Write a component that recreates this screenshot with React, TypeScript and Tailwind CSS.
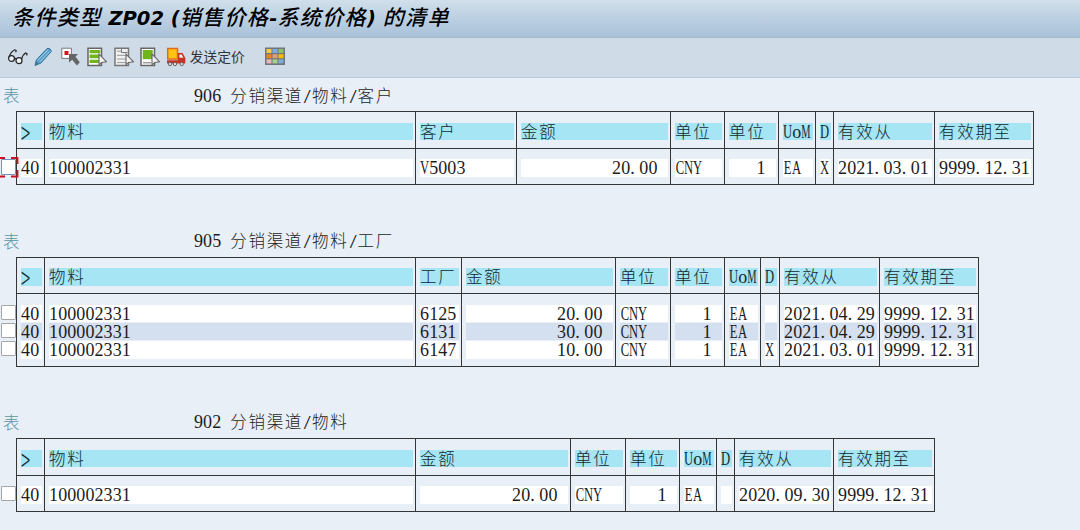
import type { ReactNode } from "react";

type Column = { label: string; width: string; align?: "right"; pad?: string };
type Row = string[];

// Splits list text into runs so that every character keeps to the fixed-pitch grid
function GridText({ children }: { children: string }) {
  const runs = children.match(/[0-9]+|[A-Za-z]+|[.]|[/]|[ ]|[>]|[^0-9A-Za-z./ >]+/g) ?? [];
  return (
    <span className="whitespace-pre">
      {runs.map((run, i) => {
        if (/^[0-9]/.test(run)) {
          return (
            <span key={i} className="tracking-[0.08px]">
              {run}
            </span>
          );
        }
        if (/^[A-Za-z]/.test(run)) return <Letters key={i}>{run}</Letters>;
        if (run === ".") {
          return (
            <span key={i} className="tracking-[4.58px]">
              .
            </span>
          );
        }
        if (run === "/") {
          return (
            <span key={i} className="inline-flex w-[9.08px] justify-center">
              <span className="scale-x-[1.5] scale-y-[1.1] text-[16.5px]">/</span>
            </span>
          );
        }
        if (run === " ") {
          return (
            <span key={i} className="tracking-[4.58px]">
              {" "}
            </span>
          );
        }
        if (run === ">") return <Chevron key={i} />;
        return (
          <span key={i} className="font-['Noto_Sans_CJK_SC',sans-serif] text-[16.5px] leading-none font-light tracking-[1.66px]">
            {run}
          </span>
        );
      })}
    </span>
  );
}

function Letters({ children }: { children: string }) {
  return (
    <>
      {children.split("").map((c, i) => (
        <span key={i} className="inline-flex w-[9.08px] justify-center">
          <span className={c === "o" ? "" : c === "M" ? "scale-x-[0.58]" : "scale-x-[0.7]"}>{c}</span>
        </span>
      ))}
    </>
  );
}

function Chevron() {
  return (
    <span className="inline-block origin-[left_58%] scale-y-[1.9] font-['Noto_Sans_CJK_SC',sans-serif] text-[17px] leading-none font-light">
      &gt;
    </span>
  );
}

function RowCheckbox({ focused }: { focused?: boolean }) {
  return (
    <span className="relative block h-[18.15px] w-4 shrink-0">
      <span
        className={
          focused
            ? "absolute top-px left-px h-4 w-[15px] rounded-[1px] border border-[#7194bd] bg-white"
            : "absolute top-px left-px h-[15px] w-[15px] rounded-[1px] border border-[#a4a6a8] bg-white"
        }
      />
      {focused && (
        <svg className="absolute -top-px left-0 z-10" width="19" height="21" fill="none" stroke="#cf1020" strokeWidth="1.8">
          <path d="M0 1h5M11 1h6.5v6M17.5 13v6.500H11M5 19.500H0" />
        </svg>
      )}
    </span>
  );
}

function ConditionTable({ id, title, columns, rows, focused }: { id: string; title: string; columns: Column[]; rows: Row[]; focused?: boolean }) {
  return (
    <section>
      <div className="flex h-[18px] items-center pl-[3px] leading-[18px]">
        <div className="w-[191px] pt-[2px] text-[#5b94a4]">
          <GridText>表</GridText>
        </div>
        <div className="pt-[2px]">
          <GridText>{id + " " + title}</GridText>
        </div>
      </div>
      <div className="mt-[7.4px] flex">
        <div className="w-4 shrink-0 pt-[47px]">
          {rows.map((_, i) => (
            <RowCheckbox key={i} focused={focused} />
          ))}
        </div>
        <div className="flex border-y border-r border-[#333537]">
          {columns.map((col, c) => (
            <div key={c} className={"shrink-0 border-l border-[#333537] " + col.width}>
              <div className="h-[36.4px] border-b border-[#333537] pt-[10.4px] pr-[2.5px] pl-[3.5px]">
                <div className="h-[17.5px] bg-[#a6e5f3] pl-[0.6px] leading-[18.4px] whitespace-nowrap text-[#10282e]">
                  <GridText>{col.label}</GridText>
                </div>
              </div>
              <div className="pt-[10.4px] pr-[2.5px] pb-[6.9px] pl-[3.5px]">
                {rows.map((row, r) => (
                  <div key={r} className="h-[18.15px]">
                    <div
                      className={
                        "h-[17.6px] pl-[0.6px] leading-[19.6px] whitespace-nowrap " +
                        (r % 2 ? "bg-[#d4dfef] " : "bg-white ") +
                        (col.align === "right" ? "text-right " + col.pad : "")
                      }
                    >
                      <GridText>{row[c]}</GridText>
                    </div>
                  </div>
                ))}
              </div>
            </div>
          ))}
        </div>
      </div>
    </section>
  );
}

function Icon({ children }: { children: ReactNode }) {
  return (
    <svg width="20" height="20" viewBox="0 0 20 20" fill="none" className="shrink-0">
      {children}
    </svg>
  );
}

function Pointer() {
  return <path d="M12 7v11l2.600-2.600 5-.6z" fill="#f4f4f4" stroke="#666" strokeWidth="1.100" />;
}

function Toolbar() {
  return (
    <div className="flex h-10 items-center border-b border-[#b9cad8] bg-[#cfdce7] pb-px pl-2">
      <div className="flex gap-[6.4px]">
        <Icon>
          <g stroke="#222" strokeWidth="1.2">
            <circle cx="3.500" cy="11.500" r="2.900" fill="#edf2f5" />
            <circle cx="11" cy="13.700" r="3" fill="#edf2f5" />
            <path d="M6.400 12q1-1.400 1.800.5M1 10Q3 4.500 6.800 2.800l1.400.8-.6 1.600M13.600 12q1.200-4.400 4-6l1.400.8-.4 1.700" />
          </g>
        </Icon>
        <Icon>
          <path d="M1 18.500l1.300-5.500L13 1.500q3-1.300 4.500 2.800L7 16z" fill="#5b9fc9" stroke="#35749f" />
          <path d="M3.500 13.500L14 2.800M5.700 15L16 4.300" stroke="#a6d0e7" />
          <path d="M1 18.500l1-4 3 2.400z" fill="#427796" />
        </Icon>
        <Icon>
          <path d="M.8 1.200h9.600v10.200H.8z" fill="#fff" stroke="#777" />
          <path d="M3.500 4h4v4h-4z" fill="#d8121d" />
          <path d="M8 7h9l-2.500 2.700 4.300 5.500-2.900 3.200-4.700-5.700L8 15.500z" fill="#656565" />
        </Icon>
        <Icon>
          <path d="M1 1.200h13.500v17.300H1z" fill="#fff" stroke="#666" strokeWidth="1.500" />
          <path d="M2.500 3h10.700v3.200H2.500zM2.500 7.500H12v3.800H2.500zM2.500 12.800H12V16H2.500z" fill="#70b51b" />
          <Pointer />
        </Icon>
        <Icon>
          <path d="M1 1.200h13.500v17.300H1z" fill="#f1f1f1" stroke="#777" strokeWidth="1.500" />
          <path d="M3 4.200h4.500M3 8.300h9M3 12h9M3 15.600h9" stroke="#999" />
          <path d="M7.500 2v3.500h6" stroke="#777" />
          <Pointer />
        </Icon>
        <Icon>
          <path d="M1 1.200h13.500v17.300H1z" fill="#fff" stroke="#666" strokeWidth="1.500" />
          <path d="M2.700 3h10v9.200h-10z" fill="#70b51b" />
          <path d="M3 15.700h8" stroke="#999" strokeWidth="1.500" />
          <Pointer />
        </Icon>
        <Icon>
          <path d="M1.700 1.500h9.800v10.500H1.700z" fill="#ffc313" stroke="#e36a1c" strokeWidth="1.500" />
          <path d="M12 6h4.500l2.800 5v5.500H1v-3.200h11z" fill="#c83222" />
          <path d="M13.400 7.500h2.200l1.800 3.200h-4z" fill="#edf0f2" />
          <g fill="#ddd" stroke="#666">
            <circle cx="4" cy="17" r="1.700" />
            <circle cx="9" cy="17" r="1.700" />
            <circle cx="15.700" cy="17" r="1.700" />
          </g>
        </Icon>
      </div>
      <span className="mb-[3px] ml-[3.5px] w-[55px] font-['Noto_Sans_CJK_SC',sans-serif] text-[13.7px] leading-5 whitespace-nowrap text-[#30353a]">发送定价</span>
      <span className="ml-5 flex">
        <Icon>
          <path d="M0 .5h20v17.500H0z" fill="#70767b" />
          <path d="M1.500 2h5v4h-5z" fill="#f5cc49" />
          <path d="M7.500 2h5v4h-5z" fill="#7eacdc" />
          <path d="M13.500 2h5v4h-5z" fill="#8fc467" />
          <path d="M1.500 7.200h5v4h-5z" fill="#ed8517" />
          <path d="M7.500 7.200h5v4h-5z" fill="#df9e79" />
          <path d="M13.500 7.200h5v4h-5z" fill="#f8bd0c" />
          <path d="M1.500 12.400h5v4h-5z" fill="#eab7bd" />
          <path d="M7.500 12.400h5v4h-5z" fill="#a7d08d" />
          <path d="M13.500 12.400h5v4h-5z" fill="#82acd8" />
        </Icon>
      </span>
    </div>
  );
}

export default function App() {
  return (
    <div className="h-[530px] w-[1080px] overflow-hidden bg-[#e8eff6] font-['Liberation_Serif','Noto_Sans_CJK_SC',serif] text-[18px] text-[#1c1c1c]">
      <header className="flex h-[38px] items-center border-b border-[#a3b8cb] bg-linear-to-b from-[#d0dfeb] to-[#a9c1d9] pl-3">
        <h1 className="font-['DejaVu_Sans','Noto_Sans_CJK_SC',sans-serif] text-[19.5px] leading-9 whitespace-pre text-black italic">
          <span className="text-[21px] font-medium tracking-[1.4px]">条件类型</span>
          <span className="font-bold"> ZP02 (</span>
          <span className="text-[21px] font-medium tracking-[1.4px]">销售价格</span>
          <span className="font-bold">-</span>
          <span className="text-[21px] font-medium tracking-[1.4px]">系统价格</span>
          <span className="font-bold">) </span>
          <span className="text-[21px] font-medium tracking-[1.4px]">的清单</span>
        </h1>
      </header>
      <Toolbar />

      <main className="pt-2">
        <ConditionTable
          id="906"
          title="分销渠道/物料/客户"
          focused
          columns={[
            { label: ">", width: "w-[28px]" },
            { label: "物料", width: "w-[371px]" },
            { label: "客户", width: "w-[101px]" },
            { label: "金额", width: "w-[154px]", align: "right", pad: "pr-[10px]" },
            { label: "单位", width: "w-[54px]" },
            { label: "单位", width: "w-[54px]", align: "right", pad: "pr-[10px]" },
            { label: "UoM", width: "w-[37px]" },
            { label: "D", width: "w-[18px]" },
            { label: "有效从", width: "w-[101px]" },
            { label: "有效期至", width: "w-[99px]" },
          ]}
          rows={[["40", "100002331", "V5003", "20.00", "CNY", "1", "EA", "X", "2021.03.01", "9999.12.31"]]}
        />
        <div className="h-[46.35px]" />
        <ConditionTable
          id="905"
          title="分销渠道/物料/工厂"
          columns={[
            { label: ">", width: "w-[28px]" },
            { label: "物料", width: "w-[371px]" },
            { label: "工厂", width: "w-[46px]" },
            { label: "金额", width: "w-[154px]", align: "right", pad: "pr-[10px]" },
            { label: "单位", width: "w-[55px]" },
            { label: "单位", width: "w-[54px]", align: "right", pad: "pr-[10px]" },
            { label: "UoM", width: "w-[36px]" },
            { label: "D", width: "w-[19px]" },
            { label: "有效从", width: "w-[100px]" },
            { label: "有效期至", width: "w-[99px]" },
          ]}
          rows={[
            ["40", "100002331", "6125", "20.00", "CNY", "1", "EA", "", "2021.04.29", "9999.12.31"],
            ["40", "100002331", "6131", "30.00", "CNY", "1", "EA", "", "2021.04.29", "9999.12.31"],
            ["40", "100002331", "6147", "10.00", "CNY", "1", "EA", "X", "2021.03.01", "9999.12.31"],
          ]}
        />
        <div className="h-[45.85px]" />
        <ConditionTable
          id="902"
          title="分销渠道/物料"
          columns={[
            { label: ">", width: "w-[28px]" },
            { label: "物料", width: "w-[371px]" },
            { label: "金额", width: "w-[155px]", align: "right", pad: "pr-[10px]" },
            { label: "单位", width: "w-[55px]" },
            { label: "单位", width: "w-[54px]", align: "right", pad: "pr-[10px]" },
            { label: "UoM", width: "w-[37px]" },
            { label: "D", width: "w-[18px]" },
            { label: "有效从", width: "w-[99px]" },
            { label: "有效期至", width: "w-[101px]" },
          ]}
          rows={[["40", "100002331", "20.00", "CNY", "1", "EA", "", "2020.09.30", "9999.12.31"]]}
        />
      </main>
    </div>
  );
}
